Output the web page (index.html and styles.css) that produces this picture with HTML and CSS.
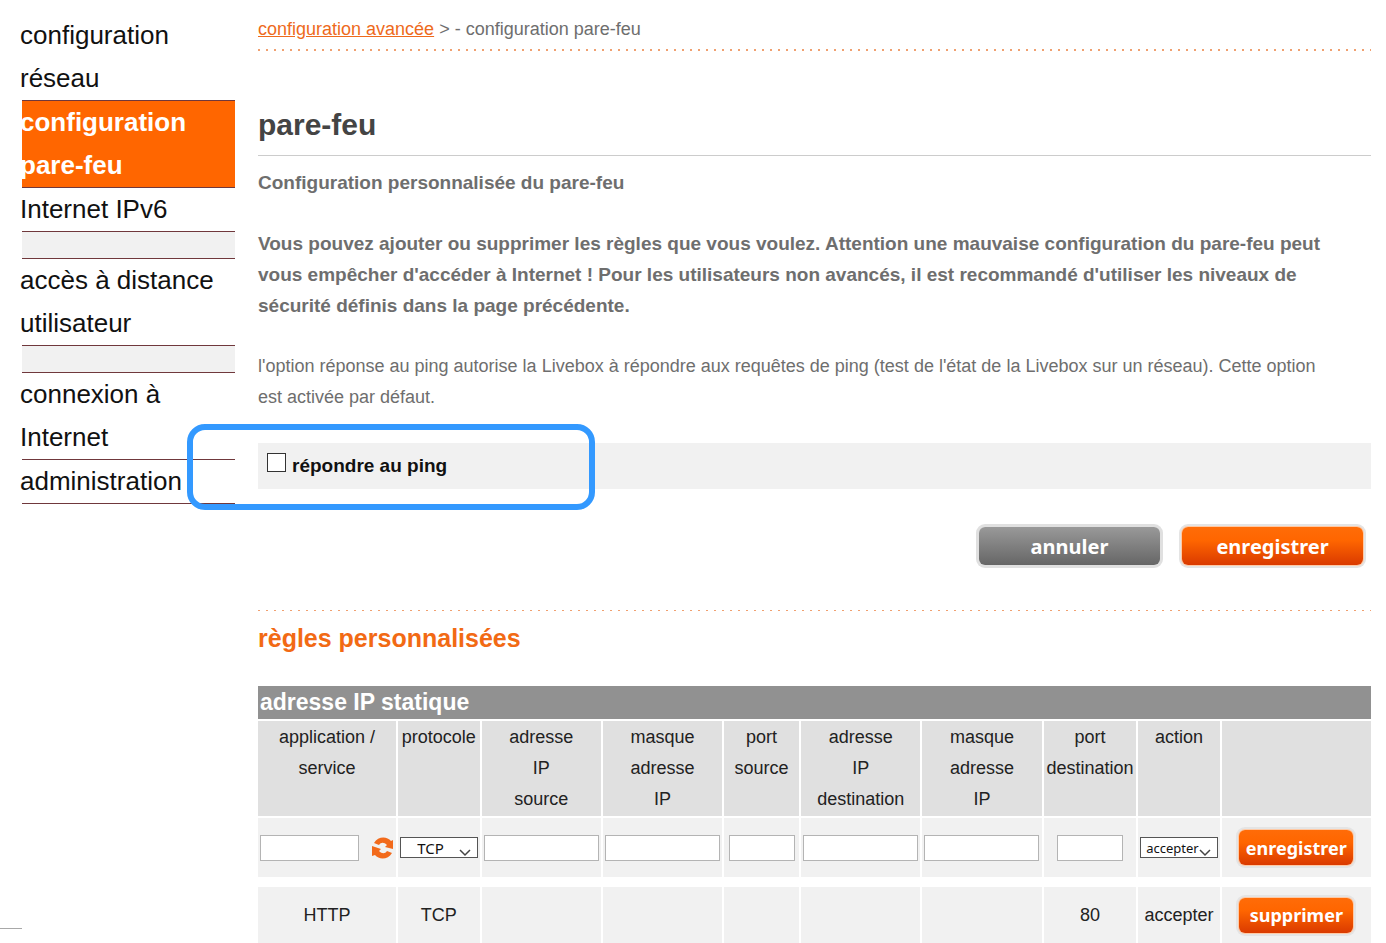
FILE: index.html
```html
<!DOCTYPE html>
<html lang="fr">
<head>
  <meta charset="UTF-8">
  <meta name="viewport" content="width=device-width, initial-scale=1.0">
  <title>configuration pare-feu</title>
  <link rel="stylesheet" href="styles.css">
</head>
<body>

  <div class="page">
    <div class="gutter"></div>

    <nav class="sidebar">
      <a href="#"><span>configuration réseau</span></a>
      <a href="#" class="active"><span>configuration pare-feu</span></a>
      <a href="#"><span>Internet IPv6</span></a>
      <div class="spacer"></div>
      <a href="#"><span>accès à distance utilisateur</span></a>
      <div class="spacer"></div>
      <a href="#"><span>connexion à Internet</span></a>
      <a href="#"><span>administration</span></a>
    </nav>

    <main class="content">
      <div class="breadcrumb"><a href="#">configuration avancée</a> &gt; - configuration pare-feu</div>
      <div class="dots"></div>

      <h1>pare-feu</h1>

      <p class="strong">Configuration personnalisée du pare-feu</p>
      <p class="strong">Vous pouvez ajouter ou supprimer les règles que vous voulez. Attention une mauvaise configuration du pare-feu peut vous empêcher d'accéder à Internet ! Pour les utilisateurs non avancés, il est recommandé d'utiliser les niveaux de sécurité définis dans la page précédente.</p>
      <p>l'option réponse au ping autorise la Livebox à répondre aux requêtes de ping (test de l'état de la Livebox sur un réseau). Cette option est activée par défaut.</p>

      <div class="ping">
        <input type="checkbox" id="ping">
        <label for="ping">répondre au ping</label>
        <div class="highlight"></div>
      </div>

      <div class="actions">
        <button type="button" class="btn grey">annuler</button>
        <button type="button" class="btn">enregistrer</button>
      </div>

      <div class="dots light"></div>
      <h2>règles personnalisées</h2>

      <table class="rules">
        <caption>adresse IP statique</caption>
        <colgroup>
          <col class="col-service">
          <col class="col-small">
          <col class="col-address">
          <col class="col-address">
          <col class="col-port">
          <col class="col-address">
          <col class="col-address">
          <col class="col-dest">
          <col class="col-small">
          <col>
        </colgroup>
        <thead>
          <tr>
            <th>application /<br>service</th>
            <th>protocole</th>
            <th>adresse<br>IP<br>source</th>
            <th>masque<br>adresse<br>IP</th>
            <th>port<br>source</th>
            <th>adresse<br>IP<br>destination</th>
            <th>masque<br>adresse<br>IP</th>
            <th>port<br>destination</th>
            <th>action</th>
            <th></th>
          </tr>
        </thead>
        <tbody>
          <tr class="edit">
            <td>
              <div class="service">
                <input type="text" aria-label="application / service">
                <svg width="22" height="22" viewBox="0 0 22 22">
                  <path d="M2 6 C6 -1 15 -1 19 4 L21 3 V12 L13 10 L15 8 C12 5 9 5 7 8 Z" fill="#f26a1b"/>
                  <path d="M20 16 C16 23 7 23 3 18 L0 19 V9 L9 12 L7 14 C10 17 13 17 15 14 Z" fill="#f26a1b"/>
                </svg>
              </div>
            </td>
            <td>
              <select class="protocol" aria-label="protocole">
                <option>TCP</option>
                <option>UDP</option>
              </select>
            </td>
            <td><input type="text" aria-label="adresse IP source"></td>
            <td><input type="text" aria-label="masque adresse IP source"></td>
            <td><input type="text" class="port" aria-label="port source"></td>
            <td><input type="text" aria-label="adresse IP destination"></td>
            <td><input type="text" aria-label="masque adresse IP destination"></td>
            <td><input type="text" class="port" aria-label="port destination"></td>
            <td>
              <select class="action" aria-label="action">
                <option>accepter</option>
                <option>refuser</option>
              </select>
            </td>
            <td><button type="button" class="btn small">enregistrer</button></td>
          </tr>
        </tbody>
        <tbody>
          <tr class="rule">
            <td>HTTP</td>
            <td>TCP</td>
            <td></td>
            <td></td>
            <td></td>
            <td></td>
            <td></td>
            <td>80</td>
            <td>accepter</td>
            <td><button type="button" class="btn small">supprimer</button></td>
          </tr>
        </tbody>
      </table>
    </main>
  </div>

</body>
</html>
```
FILE: styles.css
```css
* {
  box-sizing: border-box;
}
body {
  margin: 0;
  font-family: "Liberation Sans", Arial, sans-serif;
  font-size: 18px;
  line-height: 31px;
  background: #fff;
  color: #6e6e6e;
}
.page {
  display: grid;
  grid-template-columns: 22px 213px 1fr;
  min-height: 100vh;
}
.gutter {
  border-bottom: 1px solid #a8a8a8;
  margin-bottom: 14px;
}

/* menu */
.sidebar {
  padding-top: 14px;
}
.sidebar a {
  display: block;
  padding-right: 15px;
  border-bottom: 1px solid #70383c;
  color: #111;
  font-size: 26px;
  line-height: 43px;
  text-decoration: none;
}
.sidebar span {
  display: block;
  margin-left: -2px;
}
.sidebar .active {
  background: #ff6600;
  color: #fff;
  font-weight: bold;
}
.spacer {
  height: 27px;
  background: #f1f1f1;
  border-bottom: 1px solid #70383c;
}

/* content */
.content {
  padding: 14px 15px 0 23px;
}
.breadcrumb a {
  color: #ee6a1c;
}
.dots {
  height: 2px;
  margin-top: 4px;
  background: repeating-linear-gradient(to right, #f0a070 0 2px, transparent 2px 8px);
}
.dots.light {
  height: 1px;
  margin-top: 45px;
}
h1 {
  margin: 54px 0 11px;
  padding-bottom: 10px;
  border-bottom: 1px solid #ccc;
  color: #444;
  font-size: 30px;
  line-height: 40px;
}
p {
  margin: 0 0 30px;
  padding-right: 32px;
}
p.strong {
  font-size: 19px;
  font-weight: bold;
}
.ping {
  position: relative;
  display: flex;
  align-items: center;
  gap: 6px;
  height: 46px;
  padding: 0 9px 2px;
  background: #f1f1f1;
  color: #111;
  font-size: 19px;
  font-weight: bold;
}
.ping input {
  appearance: none;
  width: 19px;
  height: 19px;
  margin: 0 0 6px;
  border: 1px solid #333;
  background: #fff;
}
.highlight {
  position: absolute;
  top: -19px;
  left: -71px;
  width: 408px;
  height: 86px;
  border: 6px solid #3399ff;
  border-radius: 18px;
  pointer-events: none;
}
.actions {
  display: flex;
  justify-content: flex-end;
  gap: 22px;
  margin-top: 38px;
  padding-right: 8px;
}
.btn {
  width: 181px;
  height: 38px;
  padding: 0;
  border: 0;
  border-radius: 6px;
  background: linear-gradient(#ff6c08, #ff6600 35%, #da3a00);
  box-shadow: 0 0 0 1px #ffc9a4, 0 0 0 3px #e4e4e4;
  color: #fff;
  font-family: "Noto Sans", sans-serif;
  font-size: 20px;
  font-weight: bold;
  cursor: pointer;
}
.btn.grey {
  background: linear-gradient(#999, #666);
  box-shadow: 0 0 0 3px #e0e0e0;
}
.btn.small {
  width: 114px;
  height: 35px;
  font-size: 18px;
}
h2 {
  margin: 12px 0 32px;
  color: #f26a14;
  font-size: 25px;
  line-height: 31px;
}

/* rules */
.rules {
  width: 100%;
  table-layout: fixed;
  border-collapse: collapse;
  color: #222;
  text-align: center;
}
.rules caption {
  padding-left: 2px;
  background: #919191;
  border-bottom: 2px solid #fff;
  color: #fff;
  font-size: 23px;
  font-weight: bold;
  line-height: 33px;
  text-align: left;
}
.col-service { width: 12.5%; }
.col-small { width: 7.5%; }
.col-address { width: 10.9%; }
.col-port { width: 6.9%; }
.col-dest { width: 8.5%; }
.rules th, .rules td {
  padding: 0 2px;
  border-right: 2px solid #fff;
  background: #f1f1f1;
  font-weight: normal;
}
.rules th:last-child, .rules td:last-child {
  border-right: 0;
}
.rules th {
  padding: 1px 0;
  background: #e0e0e0;
  vertical-align: top;
}
.edit td {
  height: 65px;
  border-top: 2px solid #fff;
  border-bottom: 10px solid #fff;
}
.rule td {
  height: 61px;
}
.rules input {
  display: block;
  width: 100%;
  max-width: 115px;
  height: 26px;
  margin: 0 auto;
  border: 1px solid #b4b4b4;
  background: #fff;
}
.rules .port {
  width: 66px;
}
.service {
  display: flex;
  align-items: center;
  justify-content: space-between;
}
.service input {
  width: 99px;
  margin: 0;
}
.rules select {
  appearance: none;
  display: block;
  width: 100%;
  height: 21px;
  padding: 0 0 0 5px;
  border: 1px solid #555;
  border-radius: 0;
  background: #fff url("data:image/svg+xml,%3Csvg xmlns='http://www.w3.org/2000/svg' width='14' height='8'%3E%3Cpath d='M2 1l5 5 5-5' fill='none' stroke='%23444' stroke-width='1.5'/%3E%3C/svg%3E") no-repeat right 5px bottom 0;
  color: #111;
  font-family: "Noto Sans", sans-serif;
  font-size: 13px;
}
.rules .protocol {
  padding-left: 16px;
  font-size: 15px;
}
```
